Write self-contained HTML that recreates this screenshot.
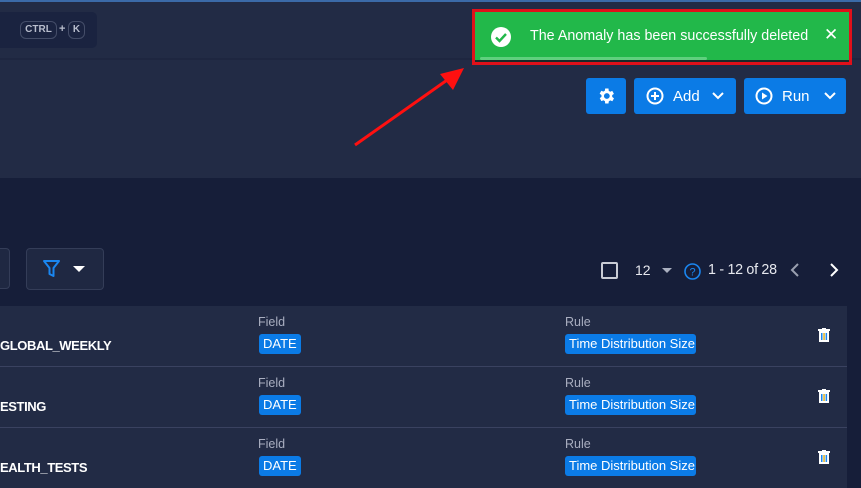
<!DOCTYPE html>
<html><head><meta charset="utf-8"><style>
*{margin:0;padding:0;box-sizing:border-box}
body{width:861px;height:488px;overflow:hidden;background:#161e39;font-family:"Liberation Sans",sans-serif;position:relative;color:#fff}
.abs{position:absolute}
.btn{position:absolute;background:#0b7be6;border-radius:3px;top:78px;height:36px;display:flex;align-items:center;color:#fff;font-size:15px}
.row{position:absolute;left:0;width:847px;height:60px;background:#222b45}
.lbl{position:absolute;font-size:12.5px;color:#a9aec0;top:9px}
.name{position:absolute;left:0;top:32px;font-size:13px;font-weight:bold;letter-spacing:-0.4px}
.badge{position:absolute;top:28px;height:20px;background:#0b7be6;border-radius:3px;font-size:13px;line-height:20px;padding:0 4px;color:#fff;overflow:hidden;white-space:nowrap}
.trash{position:absolute;left:818px;top:22px}
</style></head><body>
<div class="abs" style="left:0;top:0;width:861px;height:2px;background:#3b6aa8"></div>
<div class="abs" style="left:0;top:2px;width:861px;height:56px;background:#222b45"></div>
<div class="abs" style="left:0;top:58px;width:861px;height:2px;background:#1e2640"></div>
<div class="abs" style="left:0;top:60px;width:861px;height:118px;background:#222b45"></div>
<div class="abs" style="left:0;top:12px;width:97px;height:36px;background:#1a2340;border-radius:0 5px 5px 0"></div>
<div class="abs" style="left:20px;top:21px;width:37px;height:18px;border:1px solid #444d68;border-radius:6px;font-size:10px;font-weight:bold;color:#b8bdcc;text-align:center;line-height:16px">CTRL</div>
<div class="abs" style="left:59px;top:23px;font-size:11px;font-weight:bold;color:#b8bdcc">+</div>
<div class="abs" style="left:68px;top:21px;width:17px;height:18px;border:1px solid #444d68;border-radius:6px;font-size:10px;font-weight:bold;color:#b8bdcc;text-align:center;line-height:16px">K</div>

<svg class="abs" style="left:340px;top:60px" width="140" height="95"><path d="M15 85 L110 18" stroke="#ff1010" stroke-width="3"/><path d="M124 8 L100 14 L113 30 Z" fill="#ff1010"/></svg>

<div class="abs" style="left:472px;top:9px;width:380px;height:56px;border:3px solid #e0101a"></div>
<div class="abs" style="left:475px;top:12px;width:374px;height:50px;background:#22b84a"></div>
<div class="abs" style="left:480px;top:57px;width:227px;height:3px;background:#5fd07e;border-radius:2px"></div>
<div class="abs" style="left:475px;top:60px;width:374px;height:2px;background:#1a2a2a"></div>
<svg class="abs" style="left:490px;top:26px" width="22" height="22"><circle cx="11" cy="11" r="10" fill="#fff"/><path d="M6 11.5 L9.5 15 L16 8" stroke="#22b84a" stroke-width="2.4" fill="none"/></svg>
<div class="abs" style="left:530px;top:28px;font-size:14.3px;color:#fff">The Anomaly has been successfully deleted</div>
<div class="abs" style="left:824px;top:25px;font-size:17px;color:#fff">✕</div>

<div class="btn" style="left:586px;width:40px;justify-content:center"><svg width="20" height="20" viewBox="0 0 24 24"><path fill="#fff" d="M19.4 13a7.5 7.5 0 000-2l2.1-1.6-2-3.5-2.5 1a7.5 7.5 0 00-1.7-1L15 3h-4l-.4 2.7a7.5 7.5 0 00-1.7 1l-2.5-1-2 3.5L6.6 11a7.5 7.5 0 000 2l-2.1 1.6 2 3.5 2.5-1a7.5 7.5 0 001.7 1L11 21h4l.4-2.7a7.5 7.5 0 001.7-1l2.5 1 2-3.5zM13 15.5a3.5 3.5 0 110-7 3.5 3.5 0 010 7z"/></svg></div>
<div class="btn" style="left:634px;width:102px"><svg style="margin-left:12px" width="18" height="18"><circle cx="9" cy="9" r="7.5" stroke="#fff" stroke-width="2" fill="none"/><path d="M9 5v8M5 9h8" stroke="#fff" stroke-width="2"/></svg><span style="margin-left:9px">Add</span><svg style="margin-left:12px" width="12" height="8"><path d="M1 1l5 5 5-5" stroke="#fff" stroke-width="2" fill="none"/></svg></div>
<div class="btn" style="left:744px;width:102px"><svg style="margin-left:11px" width="18" height="18"><circle cx="9" cy="9" r="7.5" stroke="#fff" stroke-width="2" fill="none"/><path d="M7 5.5v7l5.5-3.5z" fill="#fff"/></svg><span style="margin-left:9px">Run</span><svg style="margin-left:14px" width="12" height="8"><path d="M1 1l5 5 5-5" stroke="#fff" stroke-width="2" fill="none"/></svg></div>

<div class="abs" style="left:-5px;top:248px;width:15px;height:41px;border:1px solid #343d58;border-radius:4px;background:#1f2842"></div>
<div class="abs" style="left:26px;top:248px;width:78px;height:42px;border:1px solid #343d58;border-radius:4px;background:#1f2842"></div>
<svg class="abs" style="left:42px;top:259px" width="20" height="20"><path d="M2 2h15l-5.5 7v8l-4-2V9z" stroke="#1a86f0" stroke-width="2" fill="none" stroke-linejoin="round"/></svg>
<svg class="abs" style="left:73px;top:266px" width="12" height="7"><path d="M0 0h12L6 6z" fill="#fff"/></svg>

<div class="abs" style="left:601px;top:262px;width:17px;height:17px;border:2px solid #c9ccd5;border-radius:2px"></div>
<div class="abs" style="left:635px;top:262px;font-size:14px;color:#e6e8ee">12</div>
<svg class="abs" style="left:662px;top:268px" width="10" height="6"><path d="M0 0h10L5 5z" fill="#aab0c0"/></svg>
<svg class="abs" style="left:684px;top:263px" width="17" height="17"><circle cx="8.5" cy="8.5" r="7.5" stroke="#1a86f0" stroke-width="1.6" fill="none"/><text x="8.5" y="12.5" text-anchor="middle" font-size="11" fill="#1a86f0" font-family="Liberation Sans">?</text></svg>
<div class="abs" style="left:708px;top:262px;font-size:14.3px;color:#e6e8ee;letter-spacing:-0.3px">1 - 12 of 28</div>
<svg class="abs" style="left:790px;top:263px" width="10" height="14"><path d="M8 1L2 7l6 6" stroke="#9aa0b0" stroke-width="2" fill="none"/></svg>
<svg class="abs" style="left:829px;top:263px" width="10" height="14"><path d="M2 1l6 6-6 6" stroke="#fff" stroke-width="2" fill="none"/></svg>

<div class="row" style="top:306px"><div class="name">GLOBAL_WEEKLY</div><div class="lbl" style="left:258px">Field</div><div class="badge" style="left:259px">DATE</div><div class="lbl" style="left:565px">Rule</div><div class="badge" style="left:565px;width:131px">Time Distribution Size</div>
<svg class="trash" width="12" height="14"><rect x="0" y="1" width="12" height="2" fill="#fff"/><rect x="4" y="0" width="4" height="2" fill="#fff"/><rect x="1" y="3" width="10" height="11" fill="#fff"/><rect x="3" y="5" width="1.5" height="7" fill="#1a86f0"/><rect x="5.3" y="5" width="1.5" height="7" fill="#e0b020"/><rect x="7.6" y="5" width="1.5" height="7" fill="#1a86f0"/></svg></div>
<div class="abs" style="left:0;top:366px;width:847px;height:1px;background:#3a4260"></div>
<div class="row" style="top:367px"><div class="name">ESTING</div><div class="lbl" style="left:258px">Field</div><div class="badge" style="left:259px">DATE</div><div class="lbl" style="left:565px">Rule</div><div class="badge" style="left:565px;width:131px">Time Distribution Size</div>
<svg class="trash" width="12" height="14"><rect x="0" y="1" width="12" height="2" fill="#fff"/><rect x="4" y="0" width="4" height="2" fill="#fff"/><rect x="1" y="3" width="10" height="11" fill="#fff"/><rect x="3" y="5" width="1.5" height="7" fill="#1a86f0"/><rect x="5.3" y="5" width="1.5" height="7" fill="#e0b020"/><rect x="7.6" y="5" width="1.5" height="7" fill="#1a86f0"/></svg></div>
<div class="abs" style="left:0;top:427px;width:847px;height:1px;background:#3a4260"></div>
<div class="row" style="top:428px"><div class="name">EALTH_TESTS</div><div class="lbl" style="left:258px">Field</div><div class="badge" style="left:259px">DATE</div><div class="lbl" style="left:565px">Rule</div><div class="badge" style="left:565px;width:131px">Time Distribution Size</div>
<svg class="trash" width="12" height="14"><rect x="0" y="1" width="12" height="2" fill="#fff"/><rect x="4" y="0" width="4" height="2" fill="#fff"/><rect x="1" y="3" width="10" height="11" fill="#fff"/><rect x="3" y="5" width="1.5" height="7" fill="#1a86f0"/><rect x="5.3" y="5" width="1.5" height="7" fill="#e0b020"/><rect x="7.6" y="5" width="1.5" height="7" fill="#1a86f0"/></svg></div>
</body></html>
